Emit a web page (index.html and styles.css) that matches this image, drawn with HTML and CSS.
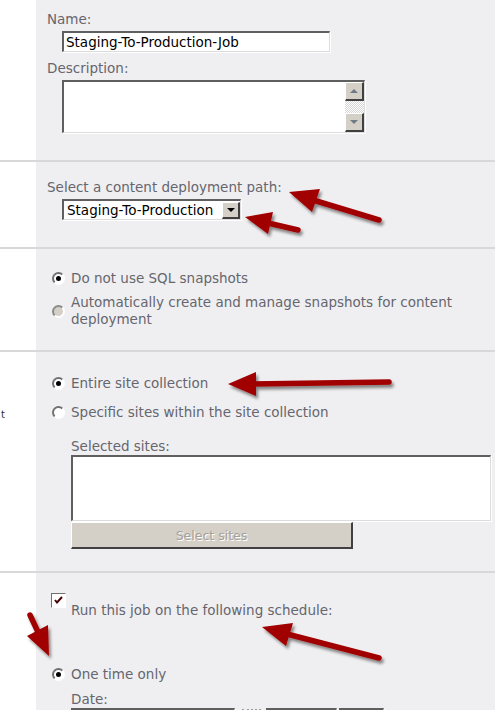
FILE: index.html
```html
<!DOCTYPE html>
<html lang="en">
<head>
  <meta charset="UTF-8" />
  <title>Content Deployment Job</title>
  <link rel="stylesheet" href="styles.css">
</head>
<body>

  <!-- Name and description -->
  <div class="section s1">
    <div class="side"></div>
    <div class="main">
      <div class="label">Name:</div>
      <div class="field name-field">Staging-To-Production-Job</div>
      <div class="label gap">Description:</div>
      <div class="field memo">
        <div class="memo-text"></div>
        <div class="scroll">
          <div class="scroll-btn up"></div>
          <div class="scroll-track"></div>
          <div class="scroll-btn down"></div>
        </div>
      </div>
    </div>
  </div>

  <!-- Path -->
  <div class="section s2">
    <div class="side"></div>
    <div class="main">
      <div class="label">Select a content deployment path:</div>
      <div class="field select path-select">
        <span class="select-value">Staging-To-Production</span>
        <span class="drop-btn"></span>
      </div>
    </div>
  </div>

  <!-- Snapshots -->
  <div class="section s3">
    <div class="side"></div>
    <div class="main">
      <div class="opt">
        <span class="radio checked"></span>
        <span class="opt-text">Do not use SQL snapshots</span>
      </div>
      <div class="opt second">
        <span class="radio disabled"></span>
        <span class="opt-text">Automatically create and manage snapshots for content deployment</span>
      </div>
    </div>
  </div>

  <!-- Scope -->
  <div class="section s4">
    <div class="side"><span class="cut">t</span></div>
    <div class="main">
      <div class="opt">
        <span class="radio checked"></span>
        <span class="opt-text">Entire site collection</span>
      </div>
      <div class="opt specific">
        <span class="radio"></span>
        <span class="opt-text">Specific sites within the site collection</span>
      </div>
      <div class="indent">
        <div class="label sites-label">Selected sites:</div>
        <div class="field listbox"></div>
        <button class="btn" disabled>Select sites</button>
      </div>
    </div>
  </div>

  <!-- Schedule -->
  <div class="section s5">
    <div class="side"></div>
    <div class="main">
      <div class="check-row">
        <span class="checkbox">
          <svg width="11" height="11" viewBox="0 0 11 11"><path d="M2 5 L4 7.5 L9 2" fill="none" stroke="#4a0000" stroke-width="2"/></svg>
        </span>
        <span class="opt-text check-text">Run this job on the following schedule:</span>
      </div>
      <div class="opt once">
        <span class="radio checked"></span>
        <span class="opt-text">One time only</span>
      </div>
      <div class="indent">
        <div class="label date-label">Date:</div>
        <div class="date-row">
          <div class="field date-input"></div>
          <span class="cal-icon"></span>
          <div class="field select hour"><span class="drop-btn"></span></div>
          <div class="field select minute"><span class="drop-btn"></span></div>
        </div>
      </div>
    </div>
  </div>

  <!-- Annotation arrows -->
  <svg class="arrows" width="495" height="710" viewBox="0 0 495 710">
    <defs>
      <filter id="shadow" x="-20%" y="-20%" width="140%" height="160%">
        <feDropShadow dx="2" dy="3" stdDeviation="1.6" flood-color="#000" flood-opacity="0.45"/>
      </filter>
    </defs>
    <g filter="url(#shadow)" fill="#a00404" stroke="#a00404">
      <line x1="379" y1="220" x2="313" y2="200" stroke-width="5.5" stroke-linecap="round"/>
      <polygon points="289,192 320,189 312,212" stroke="none"/>

      <line x1="298" y1="230" x2="268" y2="223" stroke-width="5.5" stroke-linecap="round"/>
      <polygon points="245,217 273,212 268,234" stroke="none"/>

      <line x1="389" y1="382" x2="252" y2="384" stroke-width="5.5" stroke-linecap="round"/>
      <polygon points="228,384 256,372 256,396" stroke="none"/>

      <line x1="379" y1="658" x2="287" y2="634" stroke-width="5.5" stroke-linecap="round"/>
      <polygon points="262,627 293,623 286,646" stroke="none"/>

      <line x1="30" y1="615" x2="38" y2="632" stroke-width="5.5" stroke-linecap="round"/>
      <polygon points="49,656 48,625 27,636" stroke="none"/>
    </g>
  </svg>

</body>
</html>
```

FILE: styles.css
```css
body {
  margin: 0;
  width: 495px;
  height: 710px;
  overflow: hidden;
  position: relative;
  font-family: "DejaVu Sans", Verdana, sans-serif;
  font-size: 13.5px;
  color: #66666e;
  background-color: #efeff1;
}

.section {
  display: grid;
  grid-template-columns: 36px 1fr;
  border-bottom: 2px solid #d8d8da;
}

.side {
  background-color: #fff;
  overflow: hidden;
  color: #333;
}

.main {
  background-color: #efeff1;
  padding-left: 11px;
  box-sizing: border-box;
}

.label {
  line-height: 16px;
  white-space: nowrap;
}

.label.gap {
  margin-top: 8px;
}

/* Inputs */
.field {
  background-color: #fff;
  box-sizing: border-box;
  border-style: solid;
  border-width: 2px 1px 1px 2px;
  border-color: #5f5f5f #dcdcdc #dcdcdc #5f5f5f;
  box-shadow: 1px 1px 0 #fff;
}

.name-field {
  margin: 4px 0 0 15px;
  width: 268px;
  height: 21px;
  padding: 0 2px;
  color: #000;
  line-height: 18px;
}

.memo {
  margin: 4px 0 0 15px;
  width: 303px;
  height: 53px;
  display: flex;
  justify-content: space-between;
}

.scroll {
  width: 19px;
  display: flex;
  flex-direction: column;
}

.scroll-btn {
  height: 19px;
  background-color: #d4d0c8;
  box-sizing: border-box;
  border-style: solid;
  border-width: 1px 2px 2px 1px;
  border-color: #fff #404040 #404040 #fff;
  position: relative;
}

.scroll-btn::after {
  content: "";
  position: absolute;
  left: 4px;
  top: 6px;
  border-left: 4px solid transparent;
  border-right: 4px solid transparent;
}

.scroll-btn.up::after {
  border-bottom: 4px solid #6e7b86;
}

.scroll-btn.down::after {
  border-top: 4px solid #6e7b86;
}

.scroll-track {
  flex: 1;
  background-color: #f4f4f4;
  background-image: repeating-conic-gradient(#d6d6d6 0 25%, #fff 0 50%);
  background-size: 2px 2px;
}

/* Select */
.select {
  display: flex;
  align-items: center;
  justify-content: space-between;
  color: #000;
}

.path-select {
  margin: 4px 0 0 15px;
  width: 179px;
  height: 21px;
  padding-left: 3px;
  white-space: nowrap;
}

.drop-btn {
  flex: none;
  width: 18px;
  height: 17px;
  background-color: #d4d0c8;
  box-sizing: border-box;
  border-style: solid;
  border-width: 1px 2px 2px 1px;
  border-color: #fff #404040 #404040 #fff;
  display: flex;
  align-items: center;
  justify-content: center;
}

.drop-btn::after {
  content: "";
  border-left: 4px solid transparent;
  border-right: 4px solid transparent;
  border-top: 4px solid #000;
}

/* Radios and options */
.opt {
  display: flex;
  align-items: center;
  line-height: 17px;
}

.radio {
  flex: none;
  width: 13px;
  height: 13px;
  margin: 0 6px 0 5px;
  box-sizing: border-box;
  border-radius: 50%;
  border: 2px solid;
  border-color: #707070 #fff #fff #707070;
  background-color: #fff;
  display: flex;
  align-items: center;
  justify-content: center;
}

.radio.checked::after {
  content: "";
  width: 5px;
  height: 5px;
  border-radius: 50%;
  background-color: #000;
}

.radio.disabled {
  background-color: #d4d0c8;
  border-color: #8a8a8a #fff #fff #8a8a8a;
}

.s1 .main { height: 160px; padding-top: 11px; }
.s2 .main { height: 85px; padding-top: 17px; }
.s3 .main { height: 101px; padding-top: 21px; }
.s4 .main { height: 219px; padding-top: 23px; }
.s5 .main { height: 137px; padding-top: 20px; overflow: hidden; }

.opt.second {
  margin-top: 7px;
}

.opt.specific {
  margin-top: 12px;
}

.cut {
  display: block;
  margin: 54px 0 0 1px;
  line-height: 17px;
  font-size: 10px;
}

.indent {
  padding-left: 24px;
}

.sites-label {
  margin-top: 17px;
  line-height: 17px;
}

.listbox {
  width: 420px;
  height: 66px;
}

.btn {
  display: block;
  margin-top: 1px;
  width: 282px;
  height: 27px;
  background-color: #d4d0c8;
  border-style: solid;
  border-width: 1px 2px 2px 1px;
  border-color: #fff #404040 #404040 #fff;
  font-family: "DejaVu Sans", Verdana, sans-serif;
  font-size: 12.5px;
  color: #a4a09a;
  text-shadow: 1px 1px 0 #fff;
}

/* Schedule */
.check-row {
  display: flex;
  align-items: flex-start;
}

.checkbox {
  flex: none;
  width: 15px;
  height: 15px;
  margin-left: 4px;
  box-sizing: border-box;
  border-style: solid;
  border-width: 1px;
  border-color: #707070 #fff #fff #707070;
  background-color: #fff;
  display: flex;
  align-items: center;
  justify-content: center;
}

.check-text {
  margin-left: 5px;
  padding-top: 9px;
  line-height: 17px;
}

.opt.once {
  margin-top: 47px;
}

.date-label {
  margin-top: 8px;
  line-height: 17px;
}

.date-row {
  display: flex;
  align-items: flex-start;
}

.date-input {
  width: 164px;
  height: 20px;
}

.cal-icon {
  width: 19px;
  height: 16px;
  margin: 1px 5px 0 7px;
  border-top: 2px dotted #9a9a9a;
}

.hour {
  width: 71px;
  height: 20px;
  justify-content: flex-end;
}

.minute {
  width: 45px;
  height: 20px;
  margin-left: 2px;
  justify-content: flex-end;
}

.arrows {
  position: absolute;
  top: 0;
  left: 0;
  pointer-events: none;
}
```
